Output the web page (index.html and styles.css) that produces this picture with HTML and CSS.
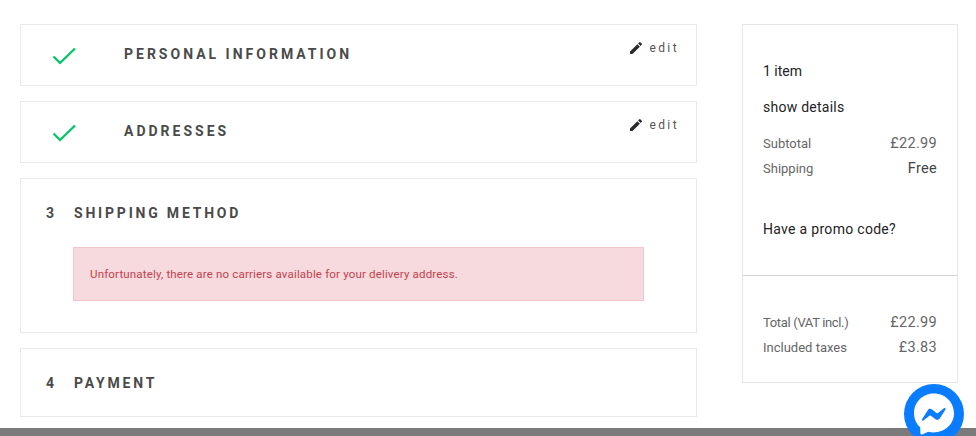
FILE: index.html
```html
<!DOCTYPE html>
<html lang="en">
  <head>
    <meta charset="utf-8" />
    <meta name="viewport" content="width=device-width, initial-scale=1.0" />
    <title>Checkout</title>
    <link rel="stylesheet" href="styles.css">
  </head>

  <body>
    <main class="checkout">
      <section class="steps">
        <article class="step step-done">
          <svg class="check" viewBox="0 0 24 20" width="24" height="20"><path d="M1.500 10.500 8 17 23 2.500" fill="none" stroke="#00c565" stroke-width="2.300"/></svg>
          <h2 class="step-title">Personal Information</h2>
          <a class="edit" href="#">
            <svg viewBox="0 0 24 24" width="16" height="16"><path fill="#2b2b2b" d="M3 17.250V21h3.750L17.810 9.940l-3.750-3.750L3 17.250zM20.710 7.040a1 1 0 0 0 0-1.410l-2.340-2.340a1 1 0 0 0-1.410 0l-1.830 1.830 3.750 3.750 1.830-1.830z"/></svg>
            edit
          </a>
        </article>

        <article class="step step-done">
          <svg class="check" viewBox="0 0 24 20" width="24" height="20"><path d="M1.500 10.500 8 17 23 2.500" fill="none" stroke="#00c565" stroke-width="2.300"/></svg>
          <h2 class="step-title">Addresses</h2>
          <a class="edit" href="#">
            <svg viewBox="0 0 24 24" width="16" height="16"><path fill="#2b2b2b" d="M3 17.250V21h3.750L17.810 9.940l-3.750-3.750L3 17.250zM20.710 7.040a1 1 0 0 0 0-1.410l-2.340-2.340a1 1 0 0 0-1.410 0l-1.830 1.830 3.750 3.750 1.830-1.830z"/></svg>
            edit
          </a>
        </article>

        <article class="step step-open">
          <h2 class="step-title"><span class="step-num">3</span>Shipping Method</h2>
          <p class="alert">Unfortunately, there are no carriers available for your delivery address.</p>
        </article>

        <article class="step step-closed">
          <h2 class="step-title"><span class="step-num">4</span>Payment</h2>
        </article>
      </section>

      <aside class="summary">
        <div class="summary-top">
          <p class="summary-line">1 item</p>
          <p class="summary-line details">show details</p>
          <div class="row"><span>Subtotal</span><span class="price">£22.99</span></div>
          <div class="row"><span>Shipping</span><span class="price row-dark">Free</span></div>
          <p class="summary-line promo">Have a promo code?</p>
        </div>
        <div class="summary-bottom">
          <div class="row"><span class="vat">Total (VAT incl.)</span><span class="price">£22.99</span></div>
          <div class="row"><span>Included taxes</span><span class="price">£3.83</span></div>
        </div>
      </aside>
    </main>

    <footer class="footer"></footer>

    <a class="messenger" href="#">
      <svg viewBox="0 0 60 60" width="60" height="60">
        <circle cx="30" cy="30" r="30" fill="#0a7cff"/>
        <path fill="#fff" d="M30 9.500c-11 0-20 8.200-20 19.800 0 5.700 2.300 10.600 6.200 14l.2 6c0 .9 1 1.500 1.800 1.100l6.100-2.700c1.700.5 3.500.7 5.200.7 11 0 20.500-8 20.500-18.900C50 18 41 9.500 30 9.500z"/>
        <path fill="#0a7cff" d="M18 35.300l5.800-9.100c.9-1.400 2.900-1.800 4.200-.8l4.600 3.500c.4.300 1 .3 1.400 0l6.200-4.800c.8-.6 1.900.4 1.300 1.300l-5.800 9.100c-.9 1.400-2.900 1.800-4.200.8l-4.600-3.500c-.4-.3-1-.3-1.400 0l-6.200 4.800c-.8.600-1.900-.4-1.300-1.300z"/>
      </svg>
    </a>
  </body>
</html>
```

FILE: styles.css
```css
body {
  margin: 0;
  background-color: #fff;
  font-family: "Roboto", "Liberation Sans", sans-serif;
  color: #232323;
}

.checkout {
  display: flex;
  align-items: flex-start;
  gap: 45px;
  padding: 24px 18px 11px 20px;
}

.steps {
  width: 677px;
  display: flex;
  flex-direction: column;
  gap: 15px;
}

.step {
  border: 1px solid #e9e9e9;
  box-sizing: border-box;
}

.step-done {
  height: 62px;
  display: flex;
  align-items: center;
  padding-left: 31px;
}

.step-done .step-title {
  margin-bottom: 2px;
  letter-spacing: 3px;
}

.check {
  margin-right: 48px;
  flex: none;
  margin-top: 2px;
}

.step-title {
  margin: 0;
  font-size: 14px;
  font-weight: 700;
  letter-spacing: 2.800px;
  text-transform: uppercase;
  color: #4a4a4a;
}

.step-num {
  display: inline-block;
  width: 28px;
}

.edit {
  margin-left: auto;
  margin-right: 17px;
  margin-bottom: 15px;
  display: flex;
  align-items: center;
  gap: 5px;
  font-size: 12px;
  letter-spacing: 2.400px;
  color: #555;
  text-decoration: none;
}

.step-open {
  height: 155px;
  padding: 26px 25px 0;
}

.alert {
  margin: 26px 27px 0 27px;
  height: 54px;
  box-sizing: border-box;
  padding: 0 16px;
  display: flex;
  align-items: center;
  background-color: #f6dadd;
  border: 1px solid #f1c6ca;
  color: #c4414f;
  font-size: 11.500px;
  letter-spacing: .17px;
}

.step-closed {
  height: 69px;
  padding: 26px 25px 0;
}

.summary {
  width: 216px;
  height: 359px;
  box-sizing: border-box;
  border: 1px solid #e6e6e6;
}

.summary-top {
  height: 251px;
  box-sizing: border-box;
  padding: 37px 20px 0;
  border-bottom: 1px solid #d2d2d2;
}

.summary-line {
  margin: 0 0 18px;
  font-size: 14px;
  line-height: 18px;
  color: #232323;
}

.details {
  margin-bottom: 15px;
  letter-spacing: .25px;
}

.promo {
  margin-top: 39px;
  letter-spacing: .3px;
}

.row {
  display: flex;
  justify-content: space-between;
  font-size: 13px;
  line-height: 25px;
  color: #666;
}

.price {
  font-size: 14.500px;
  letter-spacing: .3px;
}

.row-dark {
  color: #444;
}

.vat {
  letter-spacing: -.35px;
}

.summary-bottom {
  padding: 34px 20px 0;
}

.footer {
  height: 8px;
  background-color: #7a7a7a;
}

.messenger {
  position: fixed;
  right: 12px;
  bottom: -8px;
  display: block;
  width: 60px;
  height: 60px;
}
```
